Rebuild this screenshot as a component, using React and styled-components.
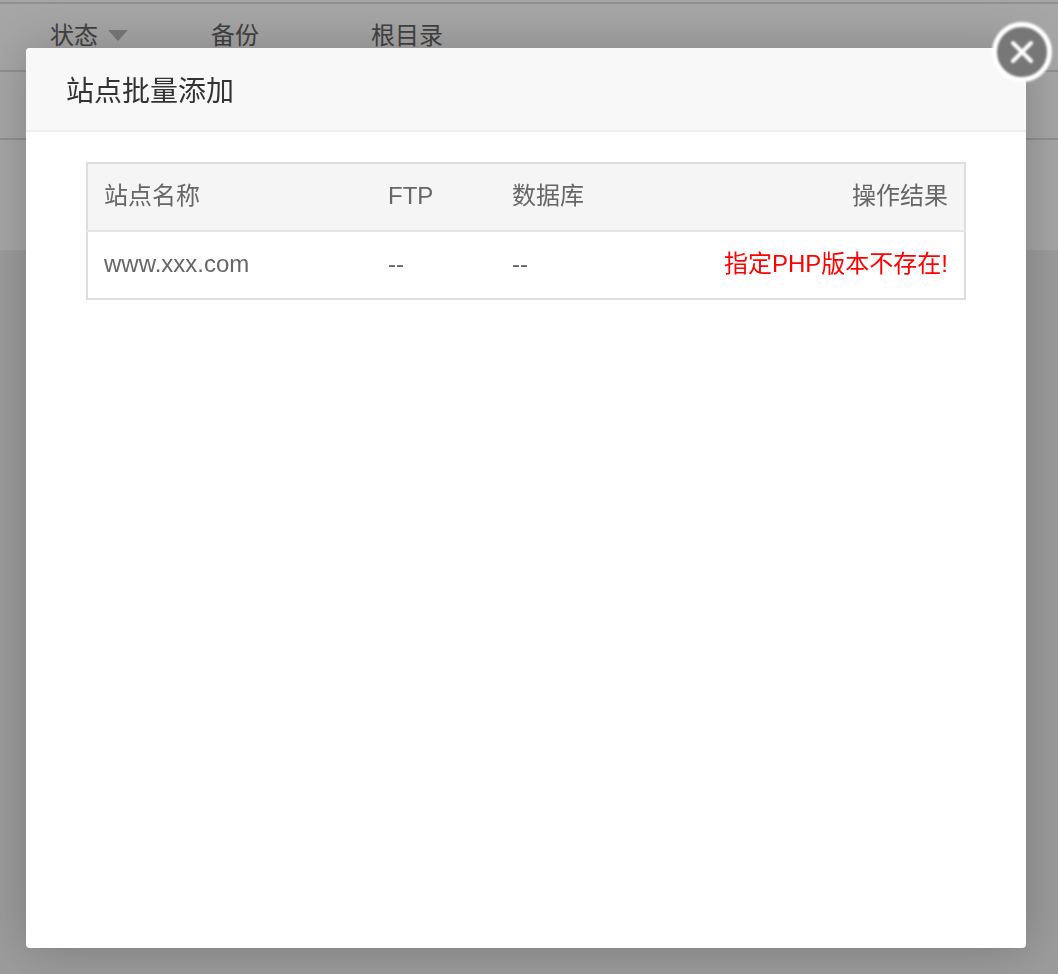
import React from 'react'
import styled, { createGlobalStyle } from 'styled-components'

const GlobalStyle = createGlobalStyle`
  html, body {
    margin: 0;
    padding: 0;
    height: 974px;
    overflow: hidden;
    background: #f0f0f0;
    font-family: "Liberation Sans", "Noto Sans CJK SC", sans-serif;
  }
`

const Page = styled.div`
  height: 974px;
  background: #f0f0f0;
`

const Panel = styled.div`
  background: #fff;
  height: 250px;
  padding-top: 2px;
  box-sizing: border-box;
`

const PageTable = styled.div`
  border-top: 2px solid #ddd;
`

const PageRow = styled.div`
  display: flex;
  height: 68px;
  padding-left: 50px;
  box-sizing: border-box;
  border-bottom: 2px solid #ddd;
`

const PageCell = styled.div`
  width: 160px;
  display: flex;
  align-items: center;
  gap: 10px;
  padding-bottom: 2px;
  font-size: 24px;
  line-height: 32px;
  color: #666;
  &:first-child {
    width: 161px;
  }
`

const Caret = styled.span`
  width: 0;
  height: 0;
  margin-bottom: 2px;
  border-left: 10px solid transparent;
  border-right: 10px solid transparent;
  border-top: 11px solid #bbb;
`

const Shade = styled.div`
  position: fixed;
  inset: 0;
  background: rgba(0, 0, 0, 0.35);
`

const Modal = styled.div`
  position: absolute;
  left: 26px;
  top: 48px;
  width: 1000px;
  height: 900px;
  background: #fff;
  border-radius: 4px;
  box-shadow: 1px 1px 50px rgba(0, 0, 0, 0.22);
`

const Title = styled.div`
  height: 84px;
  box-sizing: border-box;
  padding: 4px 40px 0;
  line-height: 80px;
  font-size: 28px;
  color: #333;
  background: #f8f8f8;
  border-bottom: 2px solid #eee;
  border-radius: 4px 4px 0 0;
`

const Close = styled.button`
  position: absolute;
  top: -26px;
  right: -26px;
  width: 60px;
  height: 60px;
  padding: 0;
  display: flex;
  align-items: center;
  justify-content: center;
  box-sizing: border-box;
  border: 5px solid #fff;
  border-radius: 50%;
  background: #777;
  filter: blur(0.8px);
`

const Body = styled.div`
  padding: 30px 60px;
`

const Table = styled.table`
  width: 880px;
  border-collapse: collapse;
  table-layout: fixed;
  border: 2px solid #ddd;
  font-size: 24px;
  line-height: 32px;
  color: #666;
`

const Th = styled.th`
  height: 68px;
  padding: 0 16px 2px;
  box-sizing: border-box;
  background: #f5f5f5;
  border-bottom: 2px solid #e5e5e5;
  font-weight: normal;
  text-align: ${props => props.align || 'left'};
  width: ${props => props.w || 'auto'};
`

const Td = styled.td`
  height: 68px;
  padding: 0 16px 2px;
  box-sizing: border-box;
  text-align: ${props => props.align || 'left'};
  color: ${props => props.color || '#666'};
`

export default function App() {
  return (
    <>
      <GlobalStyle />
      <Page>
        <Panel>
          <PageTable>
            <PageRow>
              <PageCell>状态<Caret /></PageCell>
              <PageCell>备份</PageCell>
              <PageCell>根目录</PageCell>
            </PageRow>
            <PageRow />
          </PageTable>
        </Panel>
      </Page>
      <Shade />
      <Modal>
        <Title>站点批量添加</Title>
        <Close aria-label="关闭">
          <svg width="24" height="24" viewBox="0 0 24 24">
            <path d="M3 3 L21 21 M21 3 L3 21" stroke="#fff" strokeWidth="4" strokeLinecap="round" />
          </svg>
        </Close>
        <Body>
          <Table>
            <thead>
              <tr>
                <Th w="285px">站点名称</Th>
                <Th w="124px">FTP</Th>
                <Th w="140px">数据库</Th>
                <Th align="right">操作结果</Th>
              </tr>
            </thead>
            <tbody>
              <tr>
                <Td>www.xxx.com</Td>
                <Td>--</Td>
                <Td>--</Td>
                <Td align="right" color="#f00">指定PHP版本不存在!</Td>
              </tr>
            </tbody>
          </Table>
        </Body>
      </Modal>
    </>
  )
}
